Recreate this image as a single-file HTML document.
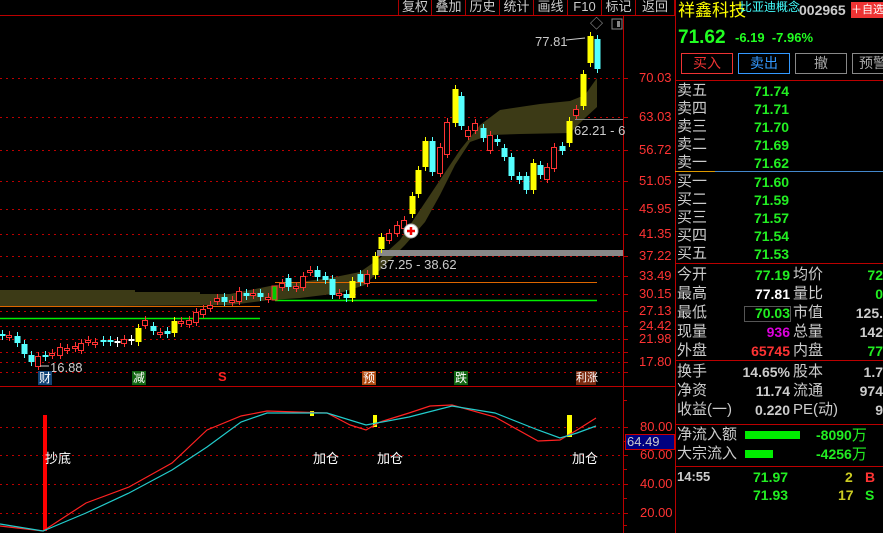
<!DOCTYPE html>
<html><head><meta charset="utf-8">
<style>
*{margin:0;padding:0;box-sizing:border-box}
body{width:883px;height:533px;background:#000;overflow:hidden;position:relative;font-family:"Liberation Sans","Noto Sans CJK SC",sans-serif;}
svg{position:absolute;left:0;top:0}
.p{position:absolute;white-space:nowrap;line-height:1}
.tb{position:absolute;top:0;height:15px;border-right:1px solid #a00;color:#ccc;font-size:13px;text-align:center;line-height:14px}
.r{font-size:15px;line-height:18px}
.btn{position:absolute;top:53px;height:21px;width:52px;border:1px solid;font-size:14px;text-align:center;line-height:19px}
</style></head><body>
<svg id="s" width="883" height="533" xmlns="http://www.w3.org/2000/svg"></svg>

<div class="tb" style="left:398px;width:34px;border-left:1px solid #a00">复权</div>
<div class="tb" style="left:432px;width:34px">叠加</div>
<div class="tb" style="left:466px;width:34px">历史</div>
<div class="tb" style="left:500px;width:34px">统计</div>
<div class="tb" style="left:534px;width:34px">画线</div>
<div class="tb" style="left:568px;width:34px">F10</div>
<div class="tb" style="left:602px;width:34px">标记</div>
<div class="tb" style="left:636px;width:39px">返回</div>

<div class="p" style="left:535px;top:35px;color:#ccc;font-size:13px">77.81</div>
<div class="p" style="left:590px;top:17px;color:#aaa;font-size:13px">◇</div>
<div class="p" style="left:380px;top:258px;color:#ccc;font-size:13px">37.25 - 38.62</div>
<div class="p" style="left:574px;top:124px;color:#ccc;font-size:13px">62.21 - 6</div>
<div class="p" style="left:45px;top:452px;color:#fff;font-size:13px">抄底</div>
<div class="p" style="left:313px;top:452px;color:#fff;font-size:13px">加仓</div>
<div class="p" style="left:377px;top:452px;color:#fff;font-size:13px">加仓</div>
<div class="p" style="left:572px;top:452px;color:#fff;font-size:13px">加仓</div>
<div class="p" style="left:50px;top:361px;color:#ccc;font-size:13px">16.88</div>

<div class="p" style="left:38px;top:371px;width:14px;height:14px;background:#114477;color:#fff;font-size:12px;text-align:center;line-height:14px">财</div>
<div class="p" style="left:132px;top:371px;width:14px;height:14px;background:#116611;color:#fff;font-size:12px;text-align:center;line-height:14px">减</div>
<div class="p" style="left:218px;top:370px;color:#f22;font-size:13px;font-weight:bold">S</div>
<div class="p" style="left:362px;top:371px;width:14px;height:14px;background:#b04a10;color:#fff;font-size:12px;text-align:center;line-height:14px">预</div>
<div class="p" style="left:454px;top:371px;width:14px;height:14px;background:#116611;color:#fff;font-size:12px;text-align:center;line-height:14px">跌</div>
<div class="p" style="left:576px;top:371px;width:20px;height:14px;background:#7a2a10;color:#fff;font-size:11px;text-align:center;line-height:14px">利涨</div>

<div id="ax"></div>
<div class="p" style="left:625px;top:434px;width:50px;height:16px;background:#000080;border:1px solid #c00;color:#ccc;font-size:13px;line-height:14px;padding-left:1px">64.49</div>

<div class="p" style="left:678px;top:2px;color:#ff0;font-size:17px">祥鑫科技</div>
<div class="p" style="left:740px;top:1px;color:#4ff;font-size:12px">比亚迪概念</div>
<div class="p" style="left:799px;top:3px;color:#ccc;font-size:14px;font-weight:bold">002965</div>
<div class="p" style="left:851px;top:2px;width:32px;height:16px;background:#e33;color:#fff;font-size:11px;line-height:16px;text-align:center">＋自选</div>
<div class="p" style="left:678px;top:28px;color:#2f2;font-size:19px;font-weight:bold">71.62</div>
<div class="p" style="left:735px;top:31px;color:#2f2;font-size:13px;font-weight:bold">-6.19 &nbsp;-7.96%</div>
<div class="btn" style="left:681px;border-color:#e33;color:#e33">买入</div>
<div class="btn" style="left:738px;border-color:#39f;color:#39f">卖出</div>
<div class="btn" style="left:795px;border-color:#888;color:#aaa">撤</div>
<div class="btn" style="left:852px;border-color:#888;color:#aaa;width:40px;text-align:left;padding-left:6px">预警</div>

<div id="rp"></div>
<div class="p" style="left:745px;top:431px;width:55px;height:8px;background:#0e0"></div>
<div class="p" style="left:745px;top:450px;width:28px;height:8px;background:#0e0"></div>

<script>
var s=document.getElementById('s'),h='';
function L(x1,y1,x2,y2,c,w,d){h+='<line x1="'+x1+'" y1="'+y1+'" x2="'+x2+'" y2="'+y2+'" stroke="'+c+'" stroke-width="'+(w||1)+'"'+(d?' stroke-dasharray="'+d+'"':'')+'/>';}
function R(x,y,w,hh,f,st){h+='<rect x="'+x+'" y="'+y+'" width="'+w+'" height="'+hh+'" fill="'+f+'"'+(st?' stroke="'+st+'"':'')+'/>';}
L(0,15.5,675,15.5,'#b00');
L(623.5,15,623.5,533,'#b00');
L(675.5,0,675.5,533,'#b00');
L(0,386.5,675,386.5,'#b00');
var gy=[78,117,150,181,209,234,256,276,294,311,326,339,352,362,372],gl=['70.03','63.03','56.72','51.05','45.95','41.35','37.22','33.49','30.15','27.13','24.42','21.98','','17.80',''];
var ax='';
gy.forEach(function(y,i){L(0,y+.5,623,y+.5,'#b00',1,'2 4');L(623,y+.5,628,y+.5,'#b00');if(gl[i])ax+='<div class="p" style="left:639px;top:'+(y-7)+'px;color:#f33;font-size:13px">'+gl[i]+'</div>';});
[427,455,484,513].forEach(function(y,i){L(0,y+.5,623,y+.5,'#b00',1,'2 4');L(623,y+.5,628,y+.5,'#b00');ax+='<div class="p" style="left:640px;top:'+(y-7)+'px;color:#f33;font-size:13px">'+['80.00','60.00','40.00','20.00'][i]+'</div>';});
[441,469,498,525,400].forEach(function(y){L(623,y+.5,627,y+.5,'#b00');});
document.getElementById('ax').innerHTML=ax;
h+='<path d="M0,290 L135,290 L135,292 L200,292 L200,294 L230,294 L270,286 L330,278 L360,272 L380,258 L400,240 L420,210 L440,180 L460,150 L480,125 L500,110 L540,104 L570,101 L585,95 L597,78 L597,107 L585,118 L570,133 L520,134 L490,135 L470,142 L455,165 L440,195 L425,222 L405,245 L385,265 L365,285 L340,293 L300,298 L270,300 L230,305 L0,307 Z" fill="#3c3a16"/>';
L(0,306.5,260,306.5,'#d60');L(0,318.5,260,318.5,'#0e0',1.5);
L(275,282.5,597,282.5,'#d60');L(275,300.5,597,300.5,'#0e0',1.5);
R(377,250,246,6,'#888');
L(575,119.5,623,119.5,'#888');
var C=[[2,334,336,'c'],[9,335,337,'r'],[17,336,343,'c'],[24,344,354,'c'],[31,355,362,'c'],[38,356,366,'r'],[45,355,357,'c'],[52,353,355,'r'],[60,347,355,'r'],[67,348,350,'r'],[75,346,348,'r'],[81,343,350,'r'],[88,340,342,'r'],[95,342,344,'r'],[103,340,342,'c'],[110,340,342,'c'],[117,341,343,'w'],[124,339,343,'r'],[131,339,341,'w'],[138,328,342,'y'],[145,320,325,'r'],[153,326,331,'c'],[160,332,334,'r'],[167,331,334,'c'],[174,321,333,'y'],[181,321,323,'r'],[189,320,324,'r'],[196,312,322,'r'],[203,309,314,'r'],[210,305,308,'r'],[217,298,301,'r'],[224,297,302,'c'],[232,300,302,'r'],[239,291,301,'r'],[246,293,296,'c'],[253,293,295,'r'],[260,293,297,'c'],[268,297,299,'r'],[282,283,287,'r'],[288,278,287,'c'],[296,286,288,'r'],[303,276,287,'r'],[310,270,272,'r'],[317,270,277,'c'],[325,276,280,'c'],[332,279,295,'c'],[339,293,295,'r'],[346,294,298,'c'],[352,281,298,'y'],[360,274,282,'c'],[367,274,283,'r'],[375,256,275,'y'],[381,237,249,'y'],[389,233,240,'r'],[397,225,233,'r'],[404,220,228,'r'],[412,196,214,'y'],[418,170,194,'y'],[425,141,167,'y'],[432,141,172,'c'],[440,147,173,'r'],[447,122,154,'r'],[455,89,123,'y'],[461,96,126,'c'],[468,130,136,'r'],[475,123,130,'r'],[483,128,138,'c'],[490,135,150,'r'],[497,139,142,'c'],[504,148,157,'c'],[511,157,176,'c'],[519,176,180,'c'],[526,176,190,'c'],[533,163,190,'y'],[540,165,175,'c'],[547,167,179,'r'],[554,147,168,'r'],[562,146,151,'c'],[569,121,143,'y'],[576,109,115,'r'],[583,74,106,'y'],[590,36,63,'y'],[597,39,69,'c']];
var col={y:'#ff0',c:'#5ff',r:'#f33',w:'#fff'};
C.forEach(function(k){var x=k[0],c=col[k[3]];L(x+.5,k[1]-4,x+.5,k[2]+4,c);
 if(k[3]=='r'){h+='<rect x="'+(x-2.5)+'" y="'+(k[1]+.5)+'" width="5" height="'+Math.max(1,k[2]-k[1])+'" fill="#000" stroke="'+c+'" stroke-width="1"/>';}
 else R(x-2.5,k[1],6,Math.max(2,k[2]-k[1]),c);});
R(272,286,5,14,'#0c0');R(272,286,5,14,'none','#f33');
h+='<circle cx="411" cy="231" r="7" fill="#fff" stroke="#aaa"/><path d="M407,231h8M411,227v8" stroke="#e00" stroke-width="2.5"/>';
h+='<path d="M566,40 L585,38" stroke="#ccc" fill="none"/><path d="M40,366 L49,366" stroke="#ccc"/>';
h+='<rect x="612" y="19" width="10" height="10" fill="none" stroke="#888"/><rect x="617" y="21" width="3" height="6" fill="#888"/>';
R(43,415,4,116,'#f00');R(310,411,4,5,'#ff0');R(373,415,4,12,'#ff0');R(567,415,5,22,'#ff0');
function P(pts,c){h+='<polyline points="'+pts+'" fill="none" stroke="'+c+'" stroke-width="1.2"/>';}
P('0,526 43,531 86,503 129,487 172,463 207,430 241,416 267,411 327,413 350,425 366,430 380,422 409,413 430,406 452,405 495,417 538,441 560,440 577,430 596,418','#f22');
P('0,524 43,531 86,513 129,493 172,470 207,447 241,422 267,413 327,413 366,425 409,417 452,406 495,413 538,430 560,438 577,433 596,426','#2cc');
L(675,80.5,883,80.5,'#b00');L(675,171.5,715,171.5,'#d90');L(715,171.5,883,171.5,'#48c');
L(675,263.5,883,263.5,'#b00');L(675,360.5,883,360.5,'#b00');L(675,424.5,883,424.5,'#b00');L(675,466.5,883,466.5,'#b00');
s.innerHTML=h;
var rp='',ob=[['卖五','71.74'],['卖四','71.71'],['卖三','71.70'],['卖二','71.69'],['卖一','71.62'],['买一','71.60'],['买二','71.59'],['买三','71.57'],['买四','71.54'],['买五','71.53']];
ob.forEach(function(o,i){var y=82+i*18+(i>=5?1:0);rp+='<div class="p r" style="left:677px;top:'+y+'px;color:#ccc">'+o[0]+'</div><div class="p r" style="left:754px;top:'+y+'px;color:#2e2;font-weight:bold;font-size:14px">'+o[1]+'</div>';});
var st=[['今开','77.19','#2e2','均价','72','#2e2'],['最高','77.81','#fff','量比','0','#2e2'],['最低','70.03','#2e2','市值','125.','#ccc'],['现量','936','#d0d','总量','142','#ccc'],['外盘','65745','#f33','内盘','77','#2e2'],null,['换手','14.65%','#ccc','股本','1.7','#ccc'],['净资','11.74','#ccc','流通','974','#ccc'],['收益(一)','0.220','#ccc','PE(动)','9','#ccc']];
st.forEach(function(o,i){if(!o)return;var y=266+i*19+(i>5?-17:0);
 rp+='<div class="p r" style="left:677px;top:'+y+'px;color:#ccc">'+o[0]+'</div><div class="p r" style="right:'+(883-790)+'px;top:'+y+'px;color:'+o[2]+';font-weight:bold;font-size:14px">'+o[1]+'</div><div class="p r" style="left:793px;top:'+y+'px;color:#ccc">'+o[3]+'</div><div class="p r" style="right:0;top:'+y+'px;color:'+o[5]+';font-weight:bold;font-size:14px">'+o[4]+'</div>';});
rp+='<div class="p" style="left:744px;top:306px;width:47px;height:16px;border:1px solid #555"></div>';
rp+='<div class="p r" style="left:677px;top:426px;color:#ccc">净流入额</div><div class="p r" style="left:816px;top:426px;color:#2e2;font-weight:bold;font-size:14px">-8090<span style="font-weight:normal;font-size:15px">万</span></div>';
rp+='<div class="p r" style="left:677px;top:445px;color:#ccc">大宗流入</div><div class="p r" style="left:816px;top:445px;color:#2e2;font-weight:bold;font-size:14px">-4256<span style="font-weight:normal;font-size:15px">万</span></div>';
rp+='<div class="p r" style="left:677px;top:468px;color:#ccc;font-weight:bold;font-size:13px">14:55</div><div class="p r" style="left:753px;top:468px;color:#2e2;font-weight:bold;font-size:14px">71.97</div><div class="p r" style="left:845px;top:468px;color:#cc2;font-weight:bold;font-size:14px">2</div><div class="p r" style="left:865px;top:468px;color:#f33;font-weight:bold;font-size:14px">B</div>';
rp+='<div class="p r" style="left:753px;top:486px;color:#2e2;font-weight:bold;font-size:14px">71.93</div><div class="p r" style="left:838px;top:486px;color:#cc2;font-weight:bold;font-size:14px">17</div><div class="p r" style="left:865px;top:486px;color:#2e2;font-weight:bold;font-size:14px">S</div>';
document.getElementById('rp').innerHTML=rp;
</script>
</body></html>
